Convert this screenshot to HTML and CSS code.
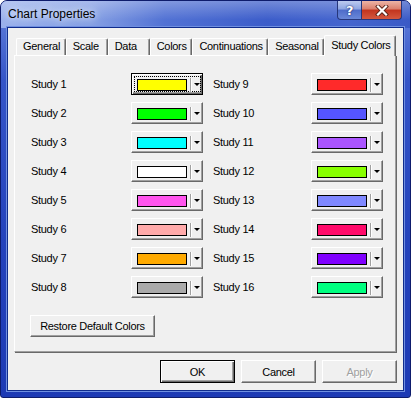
FILE: index.html
```html
<!DOCTYPE html>
<html lang="en">

<head>
    <title>Chart Properties</title>
    <link rel="stylesheet" href="styles.css">
</head>

<body>

    <div class="window">
        <!-- Title Bar -->
        <div class="titlebar">
            <span class="title">Chart Properties</span>
            <div class="caption-buttons">
                <span class="caption-btn help">?</span>
                <span class="caption-btn close">
                    <svg width="14" height="11" viewBox="0 0 14 11">
                        <path d="M3 1.5 L11 9.5 M11 1.5 L3 9.5" stroke="#5a2418" stroke-width="4" stroke-linecap="square" />
                        <path d="M3 1.5 L11 9.5 M11 1.5 L3 9.5" stroke="#fff" stroke-width="2.2" stroke-linecap="square" />
                    </svg>
                </span>
            </div>
        </div>

        <div class="client">
            <!-- Tabs -->
            <div class="tabs">
                <span class="tab">General</span>
                <span class="tab">Scale</span>
                <span class="tab">Data</span>
                <span class="tab">Colors</span>
                <span class="tab">Continuations</span>
                <span class="tab">Seasonal</span>
                <span class="tab active">Study Colors</span>
            </div>

            <!-- Study Colors Page -->
            <div class="panel">
                <div class="color-grid">
                    <div class="color-col">
                        <span class="study-label">Study 1</span>
                        <span class="color-btn focused"><span class="btn-face"><span class="swatch" style="background:#ffff00"></span><span class="divider"></span><span class="arrow"></span></span></span>
                        <span class="study-label">Study 2</span>
                        <span class="color-btn"><span class="btn-face"><span class="swatch" style="background:#00ff00"></span><span class="divider"></span><span class="arrow"></span></span></span>
                        <span class="study-label">Study 3</span>
                        <span class="color-btn"><span class="btn-face"><span class="swatch" style="background:#00ffff"></span><span class="divider"></span><span class="arrow"></span></span></span>
                        <span class="study-label">Study 4</span>
                        <span class="color-btn"><span class="btn-face"><span class="swatch" style="background:#ffffff"></span><span class="divider"></span><span class="arrow"></span></span></span>
                        <span class="study-label">Study 5</span>
                        <span class="color-btn"><span class="btn-face"><span class="swatch" style="background:#ff55ee"></span><span class="divider"></span><span class="arrow"></span></span></span>
                        <span class="study-label">Study 6</span>
                        <span class="color-btn"><span class="btn-face"><span class="swatch" style="background:#ffaaaa"></span><span class="divider"></span><span class="arrow"></span></span></span>
                        <span class="study-label">Study 7</span>
                        <span class="color-btn"><span class="btn-face"><span class="swatch" style="background:#ffaa00"></span><span class="divider"></span><span class="arrow"></span></span></span>
                        <span class="study-label">Study 8</span>
                        <span class="color-btn"><span class="btn-face"><span class="swatch" style="background:#aaaaaa"></span><span class="divider"></span><span class="arrow"></span></span></span>
                    </div>
                    <div class="color-col">
                        <span class="study-label">Study 9</span>
                        <span class="color-btn"><span class="btn-face"><span class="swatch" style="background:#ff2a2a"></span><span class="divider"></span><span class="arrow"></span></span></span>
                        <span class="study-label">Study 10</span>
                        <span class="color-btn"><span class="btn-face"><span class="swatch" style="background:#5555ff"></span><span class="divider"></span><span class="arrow"></span></span></span>
                        <span class="study-label">Study 11</span>
                        <span class="color-btn"><span class="btn-face"><span class="swatch" style="background:#aa55ff"></span><span class="divider"></span><span class="arrow"></span></span></span>
                        <span class="study-label">Study 12</span>
                        <span class="color-btn"><span class="btn-face"><span class="swatch" style="background:#88ff00"></span><span class="divider"></span><span class="arrow"></span></span></span>
                        <span class="study-label">Study 13</span>
                        <span class="color-btn"><span class="btn-face"><span class="swatch" style="background:#7f88ff"></span><span class="divider"></span><span class="arrow"></span></span></span>
                        <span class="study-label">Study 14</span>
                        <span class="color-btn"><span class="btn-face"><span class="swatch" style="background:#ff0a6a"></span><span class="divider"></span><span class="arrow"></span></span></span>
                        <span class="study-label">Study 15</span>
                        <span class="color-btn"><span class="btn-face"><span class="swatch" style="background:#8000ff"></span><span class="divider"></span><span class="arrow"></span></span></span>
                        <span class="study-label">Study 16</span>
                        <span class="color-btn"><span class="btn-face"><span class="swatch" style="background:#00ff80"></span><span class="divider"></span><span class="arrow"></span></span></span>
                    </div>
                </div>

                <button class="push restore">Restore Default Colors</button>
            </div>

            <!-- Dialog Buttons -->
            <div class="footer">
                <button class="push default">OK</button>
                <button class="push">Cancel</button>
                <button class="push" disabled>Apply</button>
            </div>
        </div>
    </div>

</body>

</html>
```

FILE: styles.css
```css
/* Base Reset */
* {
    box-sizing: border-box;
    margin: 0;
    padding: 0;
}

body {
    background-color: #ffffff;
    font-family: 'Liberation Sans', Arial, sans-serif;
    font-size: 11px;
    letter-spacing: -0.3px;
    color: #000;
}

/* Window Frame */
.window {
    width: 411px;
    height: 398px;
    display: flex;
    flex-direction: column;
    border: 1px solid #0e1c6c;
    border-radius: 7px 7px 3px 3px;
    overflow: hidden;
    background: linear-gradient(180deg, #6583dc 0%, #3555c8 20%, #2443bc 60%, #1d3ab4 100%);
}

.titlebar {
    height: 27px;
    flex: none;
    display: flex;
    align-items: flex-start;
    padding: 0 8px 0 7px;
    background:
        linear-gradient(180deg, rgba(255, 255, 255, 0.28), rgba(255, 255, 255, 0) 70%),
        linear-gradient(90deg, #9ab1ec 0%, #86a0e4 22%, #5272d4 40%, #3c5dca 65%, #4565ce 85%, #3a5ac6 100%);
}

.title {
    font-size: 12px;
    line-height: 27px;
    letter-spacing: 0;
    color: #000;
    text-shadow: 0 0 6px #e4ecfc, 0 0 10px #dbe5fa;
}

.caption-buttons {
    margin-left: auto;
    display: flex;
}

.caption-btn {
    height: 19px;
    display: flex;
    align-items: center;
    justify-content: center;
    border: 1px solid #26367a;
    border-top: none;
}

.help {
    width: 25px;
    border-radius: 0 0 0 4px;
    background: linear-gradient(180deg, #bccaef 0%, #8ea6e2 45%, #4e6cca 50%, #6a88d8 100%);
    color: #fff;
    font: bold 13px 'DejaVu Sans', sans-serif;
    text-shadow: 0 0 2px #1b2b72, 0 0 1px #1b2b72;
}

.close {
    width: 40px;
    border-left: none;
    border-radius: 0 0 4px 0;
    background: linear-gradient(180deg, #ecb4a6 0%, #da7e6c 45%, #c2341e 50%, #d4583e 100%);
}

/* Client Area */
.client {
    width: 395px;
    height: 362px;
    margin: 0 7px;
    padding: 7px 7px 0 6px;
    background-color: #f0f0f0;
    box-shadow: 0 0 0 1px #102c8c, 0 0 0 2px #6f8fe0;
}

/* Tabs */
.tabs {
    height: 20px;
    display: flex;
    align-items: flex-end;
    padding-left: 2px;
}

.tab {
    height: 17px;
    min-width: 42px;
    padding: 0 5px 0 6px;
    line-height: 15px;
    white-space: nowrap;
    background-color: #f0f0f0;
    border: 1px solid;
    border-color: #fff #696969 transparent #fff;
    border-bottom: none;
    border-radius: 2px 2px 0 0;
    box-shadow: inset -1px 0 #a0a0a0;
}

.tab.active {
    height: 21px;
    margin-bottom: -1px;
    line-height: 18px;
    position: relative;
    z-index: 1;
}

/* Tab Page */
.panel {
    padding: 17px 0 14px 16px;
    border: 1px solid;
    border-color: #fff #a0a0a0 #a0a0a0 #fff;
    box-shadow: 1px 1px 0 #696969;
}

.color-grid {
    display: flex;
    gap: 10px;
}

.color-col {
    display: grid;
    grid-template-columns: 100px 72px;
    grid-auto-rows: 22px;
    row-gap: 7px;
    align-items: center;
}

.color-col + .color-col {
    grid-template-columns: 98px 72px;
}

.study-label {
    white-space: nowrap;
}

/* Colour Picker Buttons */
.color-btn {
    width: 72px;
    height: 22px;
    display: flex;
    padding: 2px;
    background-color: #f0f0f0;
    border: 1px solid;
    border-color: #fff #696969 #696969 #fff;
    box-shadow: inset -1px -1px #a0a0a0;
}

.color-btn.focused {
    border-color: #000;
    box-shadow: inset 1px 1px #fff, inset -1px -1px #696969, inset -2px -2px #a0a0a0;
}

.btn-face {
    flex: 1;
    display: flex;
    align-items: center;
    padding: 1px 0 0 2px;
    border: 1px dotted transparent;
}

.focused .btn-face {
    border-color: #000;
}

.swatch {
    width: 50px;
    height: 12px;
    border: 1px solid #000;
}

.divider {
    width: 2px;
    height: 14px;
    margin-left: 3px;
    border-left: 1px solid #a0a0a0;
    border-right: 1px solid #fff;
}

.arrow {
    width: 0;
    height: 0;
    margin-left: 2px;
    border-left: 3px solid transparent;
    border-right: 3px solid transparent;
    border-top: 3px solid #000;
}

/* Push Buttons */
.push {
    height: 23px;
    width: 75px;
    font: inherit;
    letter-spacing: inherit;
    color: #000;
    background-color: #f0f0f0;
    border: 1px solid;
    border-color: #fff #696969 #696969 #fff;
    box-shadow: inset -1px -1px #a0a0a0;
}

.push.default {
    border-color: #000;
    box-shadow: inset 1px 1px #fff, inset -1px -1px #696969, inset -2px -2px #a0a0a0;
}

.push:disabled {
    color: #a0a0a0;
    text-shadow: 1px 1px #fff;
}

.restore {
    width: 125px;
    height: 22px;
    margin: 17px 0 0 -1px;
}

/* Footer */
.footer {
    display: flex;
    justify-content: flex-end;
    gap: 6px;
    margin: 8px -1px 0 0;
}
```
